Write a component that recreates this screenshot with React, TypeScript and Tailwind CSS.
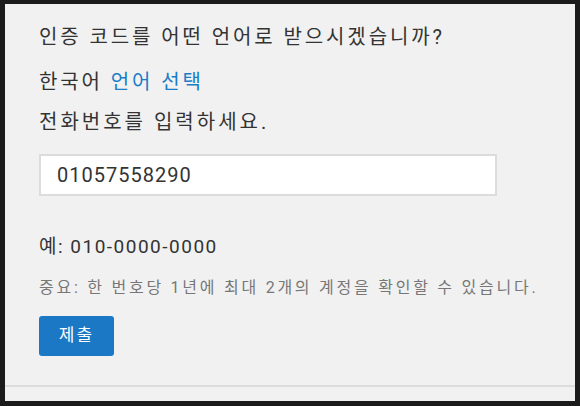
export default function App() {
  return (
    <div className="h-[406px] w-[580px] bg-[#1b1b1b] pt-[4px] pr-[5px] pb-[5px] pl-[5px] font-['Roboto','Noto_Sans_CJK_KR',sans-serif]">
      <div className="flex h-full flex-col bg-[#f1f1f1]">
        <div className="flex-1 px-[34px] pt-[21px] text-[#333]">
          <p className="text-[20px] leading-[24px] tracking-[2.9px]">인증 코드를 어떤 언어로 받으시겠습니까?</p>
          <p className="mt-[21px] text-[20px] leading-[24px] tracking-[2.9px]">
            한국어 <span className="text-[#1a7dc7]">언어 선택</span>
          </p>
          <p className="mt-[16px] text-[20px] leading-[24px] tracking-[3px]">전화번호를 입력하세요.</p>
          <input
            readOnly
            value="01057558290"
            className="mt-[20px] block h-[42px] w-[458px] border-2 border-[#dcdcdc] bg-white px-[16px] text-[20px] tracking-[1px] text-[#333] outline-none"
          />
          <p className="mt-[39px] text-[19px] leading-[24px] tracking-[1.5px]">예: 010-0000-0000</p>
          <p className="mt-[19px] text-[16px] leading-[20px] tracking-[2.75px] text-[#777]">
            중요: 한 번호당 1년에 최대 2개의 계정을 확인할 수 있습니다.
          </p>
          <button className="mt-[18px] h-[40px] w-[75px] rounded-[3px] bg-[#1a78c4] text-[17px] tracking-[2px] text-white">
            제출
          </button>
        </div>
        <div className="mb-[14px] h-[2px] bg-[#dcdcdc]" />
      </div>
    </div>
  )
}
